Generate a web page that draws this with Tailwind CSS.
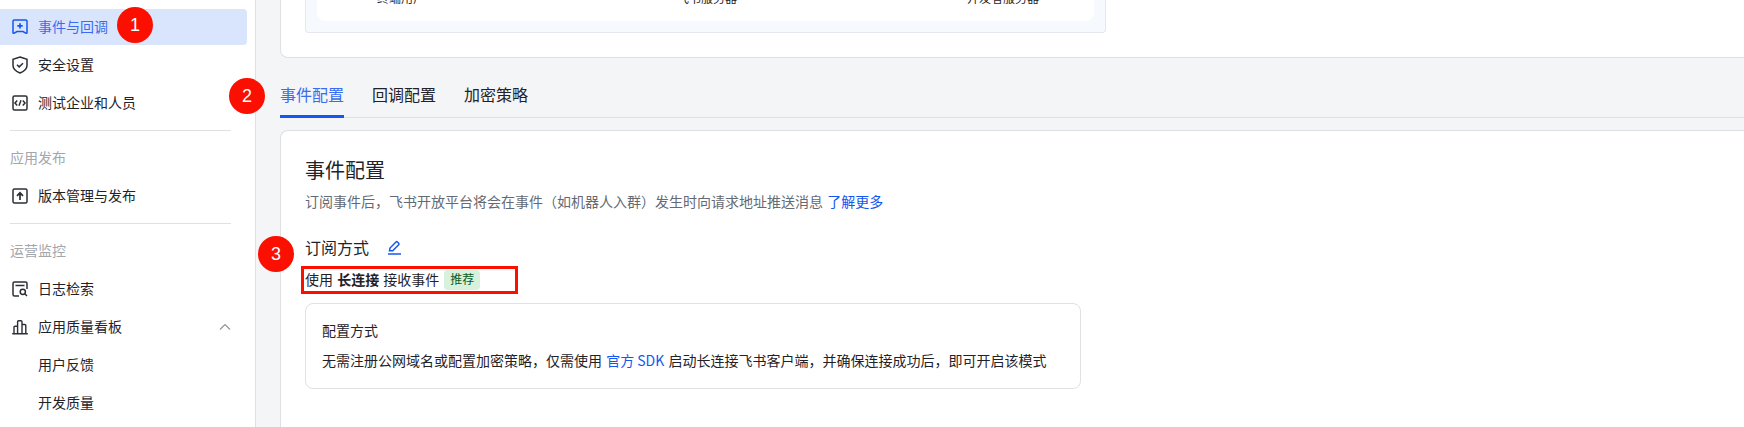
<!DOCTYPE html>
<html lang="zh-CN">
<head>
    <meta charset="UTF-8">
    <title>事件与回调</title>
    <script src="https://cdn.jsdelivr.net/npm/@tailwindcss/browser@4"></script>
</head>
<body class="h-[427px] overflow-hidden bg-[#f4f5f7] font-['Noto_Sans_CJK_SC','Liberation_Sans',sans-serif] text-[14px] text-[#1f2329]">
    <div class="relative flex h-[427px] overflow-hidden">

        <!-- sidebar -->
        <aside class="flex w-[256px] shrink-0 flex-col border-r border-[#dee0e3] bg-white pt-[9px]">
            <div class="flex flex-col gap-[2px]">
                <div class="mr-[8px] flex h-[36px] items-center gap-[10px] rounded-r-[4px] bg-[#d9e5fc] pl-[12px] text-[#3a6cf0]">
                    <svg class="h-[16px] w-[16px]" viewBox="0 0 16 16" fill="none" stroke="#1456f0" stroke-width="1.500"><path d="M1 2.200A1.200 1.200 0 0 1 2.200 1h11.600A1.200 1.200 0 0 1 15 2.200v11.400a.8.8 0 0 1-1.200.6L11 12.600H5l-2.800 1.600a.8.8 0 0 1-1.200-.6z"/><path d="M8 4.200v5.400M5.300 6.900h5.400" stroke-width="1.700"/></svg>
                    <span class="pb-[2px]">事件与回调</span>
                </div>
                <div class="flex h-[36px] items-center gap-[10px] pl-[12px]">
                    <svg class="h-[16px] w-[16px] overflow-visible" viewBox="0 0 16 16" fill="none" stroke="#2b2f36" stroke-width="1.500"><path d="M8 0l7 2.400v6c0 3.400-3.200 6-7 7.600-3.800-1.600-7-4.200-7-7.600v-6z"/><path d="M5 7.800l2.200 2.100 3.800-3.600"/></svg>
                    <span class="pb-[2px]">安全设置</span>
                </div>
                <div class="flex h-[36px] items-center gap-[10px] pl-[12px]">
                    <svg class="h-[16px] w-[16px]" viewBox="0 0 16 16" fill="none" stroke="#2b2f36" stroke-width="1.500"><rect x="1" y="1" width="14" height="14" rx="1.500"/><path d="M5.200 5.600L3 8l2.200 2.400M10.800 5.600L13 8l-2.200 2.400M9 5.200L7 10.800"/></svg>
                    <span class="pb-[2px]">测试企业和人员</span>
                </div>
            </div>
            <div class="mx-[10px] mt-[9px] h-px w-[221px] bg-[#dee0e3]"></div>
            <div class="flex h-[47px] items-center pt-[6px] pl-[10px] text-[#a2a6ad]">应用发布</div>
            <div class="flex h-[36px] items-center gap-[10px] pl-[12px]">
                <svg class="h-[16px] w-[16px]" viewBox="0 0 16 16" fill="none" stroke="#2b2f36" stroke-width="1.500"><rect x="1" y="1" width="14" height="14" rx="1.500"/><path d="M8 12V5M5 7.800L8 4.800l3 3" stroke-width="1.700"/></svg>
                <span class="pb-[2px]">版本管理与发布</span>
            </div>
            <div class="mx-[10px] mt-[9px] h-px w-[221px] bg-[#dee0e3]"></div>
            <div class="flex h-[47px] items-center pt-[6px] pl-[10px] text-[#a2a6ad]">运营监控</div>
            <div class="flex flex-col gap-[2px]">
                <div class="flex h-[36px] items-center gap-[10px] pl-[12px]">
                    <svg class="h-[16px] w-[16px]" viewBox="0 0 16 16" fill="none" stroke="#2b2f36" stroke-width="1.500"><path d="M7 15H2.500A1.500 1.500 0 0 1 1 13.500v-11A1.500 1.500 0 0 1 2.500 1h11A1.500 1.500 0 0 1 15 2.500V8M3.500 4.500h9"/><circle cx="10.800" cy="10.800" r="2.600"/><path d="M12.800 12.800l2.200 2.200"/></svg>
                    <span class="pb-[2px]">日志检索</span>
                </div>
                <div class="flex h-[36px] items-center gap-[10px] pl-[12px]">
                    <svg class="h-[16px] w-[16px]" viewBox="0 0 16 16" fill="none" stroke="#2b2f36" stroke-width="1.400"><path d="M.2 14.800h15.600M2 14.800V8.200a1 1 0 0 1 1-1h2.200M5.600 14.800V2.800a1 1 0 0 1 1-1h2.400a1 1 0 0 1 1 1v12M10 5.500h2.800a1 1 0 0 1 1 1v8.300"/></svg>
                    <span class="flex-1 pb-[2px]">应用质量看板</span>
                    <svg class="mr-[24px] h-[12px] w-[12px]" viewBox="0 0 12 12" fill="none" stroke="#8f959e" stroke-width="1.200"><path d="M1 8.500L6 3.500 11 8.500"/></svg>
                </div>
                <div class="flex h-[36px] items-center pb-[2px] pl-[38px]">用户反馈</div>
                <div class="flex h-[36px] items-center pb-[2px] pl-[38px]">开发质量</div>
            </div>
        </aside>

        <!-- main -->
        <main class="min-w-0 flex-1 pl-[24px]">
            <section class="flex h-[58px] w-[1500px] items-start rounded-bl-[8px] border-b border-l border-[#dee0e3] bg-white px-[24px]">
                <div class="h-[33px] w-[801px] rounded-b-[4px] border border-t-0 border-[#e4e8ee] bg-[#f6fafe] px-[11px] pb-[11px]">
                    <div class="relative h-[21px] overflow-hidden rounded-b-[8px] bg-white">
                        <div class="flex text-[12px] leading-[12px] text-[#1f2329] -mt-[8px]">
                            <span class="ml-[60px] w-[300px]">终端用户</span>
                            <span class="w-[290px]">飞书服务器</span>
                            <span>开发者服务器</span>
                        </div>
                    </div>
                </div>
            </section>

            <div class="mt-[24px] flex h-[36px] gap-[28px] border-b border-[#dee0e3] text-[16px] leading-[24px]">
                <div class="h-[36px] w-[64px] border-b-[3px] border-[#1456f0] text-[#3a6cf0]">事件配置</div>
                <div>回调配置</div>
                <div>加密策略</div>
            </div>

            <section class="mt-[12px] h-[400px] w-[1500px] rounded-tl-[8px] border-t border-l border-[#dee0e3] bg-white pt-[25px] pl-[24px]">
                <h2 class="text-[20px] leading-[28px] font-normal">事件配置</h2>
                <p class="mt-[6px] leading-[22px] text-[#646a73]">订阅事件后，飞书开放平台将会在事件（如机器人入群）发生时向请求地址推送消息 <span class="ml-[1px] text-[#1456f0]">了解更多</span></p>
                <div class="mt-[23px] flex h-[24px] items-center gap-[18px] text-[16px]">
                    <span>订阅方式</span>
                    <svg class="h-[15px] w-[15px]" viewBox="0 0 15 15" fill="none" stroke="#1456f0" stroke-width="1.500"><path d="M2.500 10.800L3 8l6-6a1 1 0 0 1 1.400 0l1.300 1.300a1 1 0 0 1 0 1.400l-6 6z"/><path d="M1 14h13"/></svg>
                </div>
                <div class="mt-[10px] flex h-[22px] items-center">
                    <span class="pb-[2px]">使用 <b class="mx-[1px] font-semibold">长连接</b> 接收事件</span>
                    <span class="ml-[5px] rounded-[4px] bg-[#d7f1dc] px-[6px] pb-[2px] text-[12px] leading-[18px] text-[#0b5c1f]">推荐</span>
                </div>
                <div class="mt-[12px] h-[86px] w-[776px] rounded-[8px] border border-[#e0e1e3] pt-[15px] pl-[16px]">
                    <div class="leading-[22px]">配置方式</div>
                    <p class="mt-[8px] leading-[22px]">无需注册公网域名或配置加密策略，仅需使用 <span class="mx-[1px] text-[#1456f0]">官方 SDK</span> 启动长连接飞书客户端，并确保连接成功后，即可开启该模式</p>
                </div>
            </section>
        </main>

        <!-- annotations on top of the screenshot -->
        <div class="absolute top-[7px] left-[117px] flex h-[36px] w-[36px] items-center justify-center rounded-full bg-[#fb0f00] font-['Liberation_Sans'] text-[18px] text-white">1</div>
        <div class="absolute top-[78px] left-[229px] flex h-[36px] w-[36px] items-center justify-center rounded-full bg-[#fb0f00] font-['Liberation_Sans'] text-[18px] text-white">2</div>
        <div class="absolute top-[236px] left-[258px] flex h-[36px] w-[36px] items-center justify-center rounded-full bg-[#fb0f00] font-['Liberation_Sans'] text-[18px] text-white">3</div>
        <div class="absolute top-[266px] left-[301px] h-[28px] w-[217px] border-[3px] border-[#fb0f00]"></div>
    </div>
</body>
</html>
